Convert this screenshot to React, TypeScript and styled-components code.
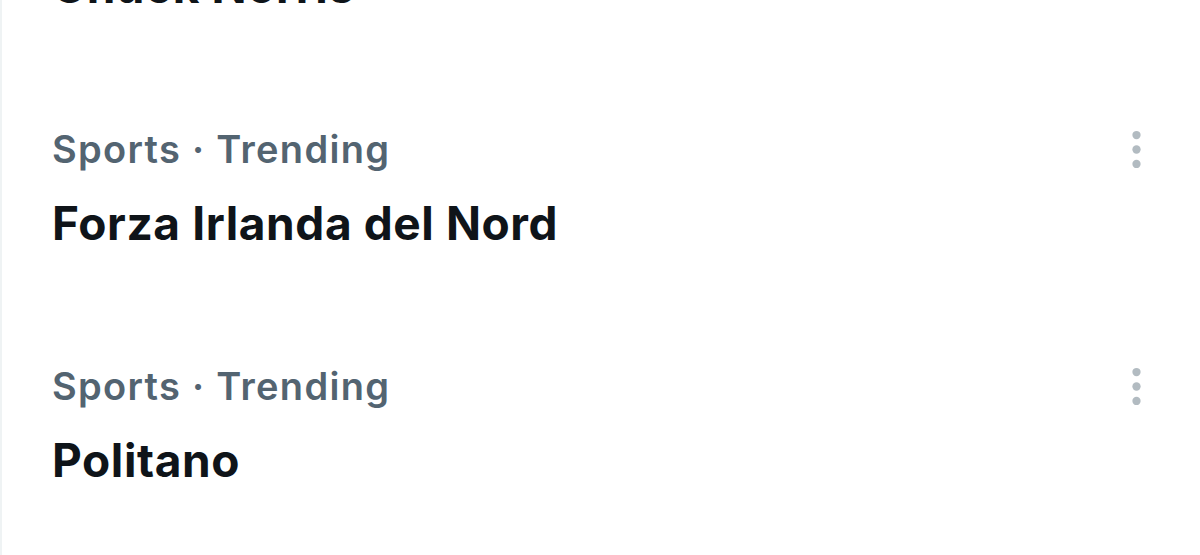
import React from 'react';
import styled, { createGlobalStyle } from 'styled-components';

const GlobalStyle = createGlobalStyle`
  html, body {
    margin: 0;
    padding: 0;
    background: #ffffff;
    overflow: hidden;
  }
  body {
    font-family: Inter, "Noto Sans", "DejaVu Sans", sans-serif;
    -webkit-font-smoothing: antialiased;
  }
`;

const Page = styled.div`
  width: 1200px;
  height: 555px;
  overflow: hidden;
  box-sizing: border-box;
  border-left: 2px solid #eff3f4;
`;

// the list is scrolled: the first trend only shows the bottom of its name
const Feed = styled.div`
  margin-top: -42px;
  display: flex;
  flex-direction: column;
`;

const TrendRow = styled.div<{ $clipped?: boolean }>`
  padding: ${p => (p.$clipped ? '0' : '55px')} 38px 56px 50px;
  display: flex;
  flex-direction: column;
`;

const TrendHeader = styled.div`
  display: flex;
  align-items: center;
  justify-content: space-between;
  height: 48px;
`;

const Meta = styled.span`
  font-size: 38px;
  line-height: 48px;
  font-weight: 600;
  color: #536471;
  letter-spacing: 1.3px;
`;

const Title = styled.div<{ $clipped?: boolean }>`
  margin-top: ${p => (p.$clipped ? '0' : '22px')};
  font-size: 46px;
  line-height: 56px;
  font-weight: 700;
  color: #0f1419;
  letter-spacing: 0.6px;
`;

const MoreButton = styled.button`
  width: 51px;
  height: 51px;
  padding: 0;
  border: none;
  background: transparent;
  display: flex;
  align-items: center;
  justify-content: center;
  color: #b2bbc1;
`;

const MoreIcon = () => (
  <svg viewBox="0 0 24 24" width="51" height="51" fill="currentColor">
    <circle cx="12" cy="5.2" r="1.95" />
    <circle cx="12" cy="12" r="1.95" />
    <circle cx="12" cy="18.8" r="1.95" />
  </svg>
);

const trends = [
  { category: 'Sports · Trending', name: 'Chuck Norris' },
  { category: 'Sports · Trending', name: 'Forza Irlanda del Nord' },
  { category: 'Sports · Trending', name: 'Politano' },
];

export default function App() {
  return (
    <>
      <GlobalStyle />
      <Page>
        <Feed>
          {trends.map((t, i) => (
            <TrendRow key={t.name} $clipped={i === 0}>
              {i > 0 && (
                <TrendHeader>
                  <Meta>{t.category}</Meta>
                  <MoreButton aria-label="More">
                    <MoreIcon />
                  </MoreButton>
                </TrendHeader>
              )}
              <Title $clipped={i === 0}>{t.name}</Title>
            </TrendRow>
          ))}
        </Feed>
      </Page>
    </>
  );
}
